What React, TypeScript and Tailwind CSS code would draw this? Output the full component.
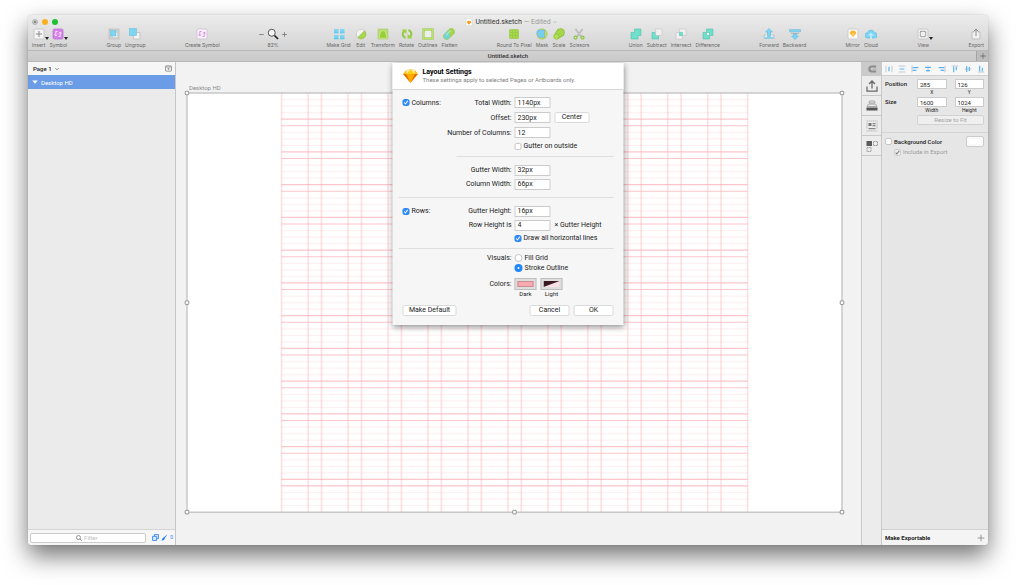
import type { ReactNode } from "react";

const GREEN = "#a5d64c";
const TEAL = "#6fe0cc";
const BLUE = "#7fd4f2";

function Icon({ children, className = "size-3" }: { children: ReactNode; className?: string }) {
  return (
    <svg viewBox="0 0 24 24" fill="none" className={`${className} shrink-0`} aria-hidden="true">
      {children}
    </svg>
  );
}

/** Sketch diamond */
function Gem() {
  return (
    <>
      <path d="M5.5 3 12 2l6.5 1L23 9 12 22 1 9z" fill="#fdad00" />
      <path d="M12 2 6 9h12z" fill="#fed305" />
      <path d="M1 9h5l6 13zM23 9h-5l-6 13z" fill="#ea6c00" />
      <path d="M6 9h12l-6 13z" fill="#fdad00" />
      <path d="M5.5 3 1 9h5zM18.5 3 23 9h-5z" fill="#fdc231" />
      <path d="M5.5 3 12 2 6 9zM18.5 3 12 2l6 7z" fill="#feeeb7" />
    </>
  );
}

function SyncArrows({ color }: { color: string }) {
  return (
    <g stroke={color} strokeWidth="1.8">
      <path d="M11 7H7.5v8M13 17h3.5V9" />
      <path d="m5 13 2.5 3 2.5-3M14 11l2.5-3 2.5 3" />
    </g>
  );
}

const ICONS: Record<string, ReactNode> = {
  Insert: (
    <>
      <rect x="2" y="2" width="20" height="20" rx="3" fill="#f4f4f4" stroke="#bdbdbd" strokeWidth="1.5" />
      <path d="M12 6v12M6 12h12" stroke="#8a8a8a" strokeWidth="2" />
    </>
  ),
  Symbol: (
    <>
      <rect x="2" y="2" width="20" height="20" rx="3" fill="#d583ea" stroke="#b86bd0" strokeWidth="1.5" />
      <SyncArrows color="#fbe9ff" />
    </>
  ),
  Group: (
    <>
      <rect x="2" y="2" width="20" height="20" fill="#d2d2d2" stroke="#bcbcbc" strokeWidth="1.5" />
      <rect x="9" y="9" width="10" height="10" fill="#f6f6f6" stroke="#c4c4c4" />
      <rect x="5" y="5" width="11" height="11" fill={BLUE} stroke="#62bfe0" />
    </>
  ),
  Ungroup: (
    <>
      <rect x="9" y="9" width="13" height="13" fill="#f1f1f1" stroke="#bdbdbd" strokeWidth="1.5" />
      <rect x="1" y="1" width="14" height="14" fill={BLUE} stroke="#62bfe0" />
    </>
  ),
  "Create Symbol": (
    <>
      <rect x="2" y="2" width="20" height="20" rx="3" fill="#f6f0f7" stroke="#c9bfcb" strokeWidth="1.5" />
      <SyncArrows color="#dd83e8" />
    </>
  ),
  "Make Grid": (
    <>
      {[2, 14].map((x) =>
        [2, 14].map((y) => (
          <g key={`${x}-${y}`}>
            <rect x={x} y={y} width="9" height="9" fill={BLUE} />
            <path d={`M${x} ${y + 6.5}h9`} stroke="#4fb3dc" />
          </g>
        ))
      )}
    </>
  ),
  Edit: (
    <>
      <circle cx="12" cy="12" r="9.5" fill="#f3f3f3" stroke="#b5b5b5" />
      <path d="M19 5.5A9.500 9.500 0 1 1 5.500 19z" fill={GREEN} stroke="#8abb35" />
    </>
  ),
  Transform: (
    <>
      <rect x="2" y="2" width="20" height="20" fill="#b9dd75" stroke="#a4c862" />
      <path d="M8 6h8l4 14H4z" fill="#97cf35" stroke="#d6efa5" />
    </>
  ),
  Rotate: (
    <>
      <path d="M9 20C2 17 2 10 6 6M15 4c7 3 7 10 3 14" stroke="#93c93b" strokeWidth="4" />
      <path d="M1 3h10v9zM23 21H13v-9z" fill="#9fd243" />
    </>
  ),
  Outlines: (
    <>
      <rect x="3" y="3" width="18" height="18" fill="#ededed" stroke="#8fc43a" strokeWidth="4" />
      <rect x="3" y="3" width="18" height="18" stroke="#b7e563" strokeWidth="2" />
    </>
  ),
  Flatten: (
    <g transform="rotate(-45 12 12)">
      <rect x="-1" y="5.5" width="26" height="13" rx="6.500" fill={GREEN} stroke="#8cc04c" />
      <path d="M6 6h11L9 18H6A6 6 0 0 1 6 6z" fill="#6fd6d1" />
      <path d="M6 9.500h13" stroke="#fff" strokeOpacity=".5" strokeWidth="2" />
    </g>
  ),
  "Round To Pixel": (
    <>
      <rect x="3" y="3" width="18" height="18" rx="1" fill={GREEN} stroke="#90bf3a" />
      <path d="M3 9h18M3 15h18M9 3v18M15 3v18" stroke="#8fc93a" />
    </>
  ),
  Mask: (
    <>
      <circle cx="12" cy="12" r="10.5" fill="#c2dc62" stroke="#a3bd53" />
      <path d="M4 4h13v15H7A10 10 0 0 1 4 4z" fill="#79cdf0" stroke="#60afd6" />
    </>
  ),
  Scale: (
    <>
      <circle cx="15" cy="9" r="8" fill={GREEN} stroke="#7eac2b" />
      <path d="m2 15 6-10 11 12-10 5z" fill={GREEN} />
      <path d="m2 15 6-10M9 22l10-6" stroke="#7eac2b" />
      <circle cx="7" cy="17" r="5.500" fill="#afe04f" stroke="#7eac2b" />
    </>
  ),
  Scissors: (
    <>
      <path d="M5 2 16 17M19 2 8 17" stroke="#a9a9a9" strokeWidth="3" />
      <path d="M5 2 16 17M19 2 8 17" stroke="#e2e2e2" />
      <circle cx="5" cy="19" r="3" stroke="#8cc63e" strokeWidth="2.5" />
      <circle cx="19" cy="19" r="3" stroke="#8cc63e" strokeWidth="2.5" />
    </>
  ),
  Union: <path d="M9 2h13v13h-6v7H2V9h7z" fill={TEAL} stroke="#43bda6" />,
  Subtract: (
    <>
      <path d="M2 9h7v6h6v7H2z" fill={TEAL} stroke="#43bda6" />
      <path d="M9 2h13v13H9z" fill="#efefef" stroke="#bdbdbd" />
    </>
  ),
  Intersect: (
    <>
      <path d="M9 2h13v13h-7v7H2V9h7z" fill="#efefef" stroke="#bdbdbd" />
      <path d="M9 9h6v6H9z" fill={TEAL} stroke="#43bda6" />
    </>
  ),
  Difference: (
    <>
      <path d="M9 2h13v13h-7v7H2V9h7z" fill={TEAL} stroke="#43bda6" />
      <path d="M9 9h6v6H9z" fill="#f3f3f3" stroke="#43bda6" />
    </>
  ),
  Forward: (
    <>
      <path d="M6 14H2v7h20v-7h-4" fill="#ececec" stroke="#a9bcc4" strokeWidth="1.5" />
      <path d="m12 1 7 7h-4v9H9V8H5z" fill={BLUE} stroke="#54b4d9" />
      <path d="M3 18h18v3H3z" fill={BLUE} />
    </>
  ),
  Backward: (
    <>
      <path d="M1 3h22v5H1z" fill={BLUE} stroke="#7fb6ca" />
      <path d="M4 11h16" stroke="#b6b6b6" strokeWidth="2" />
      <path d="M9 12h6v4h4l-7 7-7-7h4z" fill={BLUE} stroke="#54b4d9" />
    </>
  ),
  Mirror: (
    <>
      <rect x="2" y="2" width="20" height="20" rx="3" fill="#f8f8f8" stroke="#c4c4c4" strokeWidth="1.5" />
      <path d="m8 6 4-1 4 1 3 4-7 8-7-8z" fill="#f8b52c" />
      <path d="M9 10h6l-3 8z" fill="#ffd35c" />
    </>
  ),
  Cloud: (
    <>
      <path d="M6 20a5.500 5.500 0 0 1-1-11 7.500 7.500 0 0 1 14 0 5.500 5.500 0 0 1 0 11z" fill={BLUE} stroke="#4fb7df" />
      <path d="M12 22v-9M8 15l4-4 4 4" stroke="#efffff" strokeWidth="2" />
    </>
  ),
  View: (
    <>
      <rect x="2" y="2" width="20" height="20" rx="3" fill="#f1f1f1" stroke="#bdbdbd" strokeWidth="1.5" />
      <rect x="7" y="7" width="10" height="10" stroke="#999" strokeWidth="1.5" />
      <path d="M9.500 4v3M14.500 4v3M9.500 17v3M14.500 17v3M4 9.500h3M4 14.500h3M17 9.500h3M17 14.500h3" stroke="#b5b5b5" />
    </>
  ),
  Export: (
    <>
      <path d="M8 8H4v14h16V8h-4" fill="#f1f1f1" stroke="#b2b2b2" strokeWidth="1.5" />
      <path d="M12 16V2M7 7l5-5 5 5" stroke="#8a8a8a" strokeWidth="2" />
    </>
  ),
};

const MENU_ITEMS = ["Insert", "Symbol", "View"];

const TOOLBAR: string[][] = [
  ["Insert", "Symbol"],
  ["Group", "Ungroup"],
  ["Create Symbol"],
  ["82%"],
  ["Make Grid", "Edit", "Transform", "Rotate", "Outlines", "Flatten"],
  ["Round To Pixel", "Mask", "Scale", "Scissors"],
  ["Union", "Subtract", "Intersect", "Difference"],
  ["Forward", "Backward"],
  ["Mirror", "Cloud"],
  ["View"],
  ["Export"],
];

function ToolButton({ name }: { name: string }) {
  return (
    <button className="flex flex-col items-center gap-px">
      <span className="relative flex h-3 items-center">
        <Icon>{ICONS[name]}</Icon>
        {MENU_ITEMS.includes(name) && (
          <svg viewBox="0 0 4 3" className="absolute -right-1 bottom-0 h-[3px] w-1" aria-hidden="true">
            <path d="M0 0h4L2 3z" fill="#222" />
          </svg>
        )}
      </span>
      <span>{name}</span>
    </button>
  );
}

function ZoomControl() {
  return (
    <div className="flex flex-col items-center gap-px">
      <div className="flex h-3 items-center gap-[3px]">
        <button aria-label="Zoom out">
          <Icon className="size-[5px]"><path d="M1 12h22" stroke="#777" strokeWidth="4" /></Icon>
        </button>
        <Icon>
          <circle cx="9.5" cy="9.5" r="7" fill="#f1f7fa" stroke="#555" strokeWidth="2" />
          <path d="m15 15 7 7" stroke="#222" strokeWidth="3.5" />
        </Icon>
        <button aria-label="Zoom in">
          <Icon className="size-[5px]"><path d="M1 12h22M12 1v22" stroke="#777" strokeWidth="4" /></Icon>
        </button>
      </div>
      <span>82%</span>
    </div>
  );
}

function TitleBar() {
  return (
    <header className="rounded-t bg-gradient-to-b from-[#ececec] to-[#d3d3d3]">
      <div className="relative flex h-[13px] items-center px-1">
        <div className="flex gap-1">
          <button aria-label="Close" className="flex size-1.5 items-center justify-center rounded-full border border-[#b4b4b4] bg-[#c4c4c4]">
            <span className="size-0.5 rounded-full bg-[#777]" />
          </button>
          <button aria-label="Minimize" className="size-1.5 rounded-full bg-[#fdb021]" />
          <button aria-label="Zoom window" className="size-1.5 rounded-full bg-[#1fc036]" />
        </div>
        <div className="absolute inset-x-0 flex items-center justify-center gap-0.5 pl-1.5 text-[7px] leading-[8px] text-[#333]">
          <Icon className="size-2">
            <path d="M3 1h13l5 5v17H3z" fill="#fff" stroke="#bbb" />
            <path d="m8 9 4-1 4 1 3 4-7 7-7-7z" fill="#f79d1c" />
          </Icon>
          <span>Untitled.sketch</span>
          <span className="text-[#999]">— Edited</span>
          <Icon className="size-1"><path d="m3 7 9 9 9-9" stroke="#999" strokeWidth="3" /></Icon>
        </div>
      </div>
      <div className="flex justify-between px-1 pb-px font-[Inter,sans-serif] text-[5px] leading-[8px] whitespace-nowrap text-[#666]">
        {TOOLBAR.map((group) => (
          <div key={group[0]} className="flex gap-1">
            {group.map((name) => (name === "82%" ? <ZoomControl key={name} /> : <ToolButton key={name} name={name} />))}
          </div>
        ))}
      </div>
    </header>
  );
}

function TabBar() {
  return (
    <div className="flex h-3 items-stretch border-y border-[#b8b8b8] bg-gradient-to-b from-[#d2d2d2] to-[#c9c9c9]">
      <span className="flex-1 pl-3 text-center text-[6px] leading-[10px] font-medium text-[#333]">Untitled.sketch</span>
      <button aria-label="New tab" className="flex w-3 items-center justify-center border-l border-[#a5a5a5] bg-[#bdbdbd]">
        <Icon className="size-1.5"><path d="M12 1v22M1 12h22" stroke="#666" strokeWidth="3" /></Icon>
      </button>
    </div>
  );
}

function Sidebar() {
  return (
    <aside className="flex w-[148px] shrink-0 flex-col border-r border-[#c6c6c6] bg-[#ebebeb]">
      <div className="flex h-[13px] items-center bg-[#f6f6f6] px-[5px]">
        <button className="flex items-center gap-[3px] text-[6px] font-medium text-[#222]">
          Page 1
          <Icon className="size-1"><path d="m2 7 10 10L22 7" stroke="#555" strokeWidth="4" /></Icon>
        </button>
        <button aria-label="Toggle page list" className="-mr-0.5 ml-auto">
          <Icon className="size-[7px]">
            <rect x="2" y="3" width="20" height="18" rx="2" stroke="#777" strokeWidth="2.5" />
            <path d="M2 7h20" stroke="#777" strokeWidth="2" />
            <path d="M8 11h8l-4 6z" fill="#777" />
          </Icon>
        </button>
      </div>
      <button className="flex h-[14px] items-center gap-[3px] bg-[#6b9ce6] px-1 text-[6px] text-white">
        <Icon className="size-1.5"><path d="M1 6h22L12 19z" fill="#fff" /></Icon>
        Desktop HD
      </button>
      <div className="mt-auto flex h-4 items-center gap-1.5 border-t border-[#d4d4d4] bg-[#f6f6f6] px-0.5">
        <label className="flex h-2.5 flex-1 items-center justify-center gap-0.5 rounded-xs border border-[#cbcbcb] bg-white">
          <Icon className="size-1.5">
            <circle cx="10" cy="10" r="8" stroke="#777" strokeWidth="3" />
            <path d="m16 16 7 7" stroke="#777" strokeWidth="3" />
          </Icon>
          <input aria-label="Filter" placeholder="Filter" className="w-4 text-[6px] leading-[8px] outline-none placeholder:text-[#c0c0c0]" />
        </label>
        <div className="flex items-center gap-0.5 text-[5px] text-[#2c83f6]">
          <button aria-label="Filter slices">
            <Icon className="size-[7px]">
              <path d="M8 2h14v14H8z" stroke="#2c83f6" strokeWidth="3" />
              <path d="M2 8h14v14H2z" fill="#dcebff" stroke="#2c83f6" strokeWidth="3" />
            </Icon>
          </button>
          <button aria-label="Filter shapes">
            <Icon className="size-[7px]"><path d="M23 1 10 11c-5 1-4 7-9 11 7 1 12-2 12-8z" fill="#1a78f4" /></Icon>
          </button>
          <span>0</span>
        </div>
      </div>
    </aside>
  );
}

const COLUMNS = 12;
const COLUMN_STEP = 97.6;
const COLUMN_WIDTH = 66;
const ROW_UNIT = 16;

const GRID_LEFT = 230;
const GRID_RIGHT = GRID_LEFT + COLUMN_STEP * (COLUMNS - 1) + COLUMN_WIDTH;

const HANDLES = [[0, 0], [1600, 0], [0, 512], [1600, 512], [0, 1024], [800, 1024], [1600, 1024]];

function Artboard() {
  const lines = Array.from({ length: 63 }, (_, i) => i + 1);
  return (
    <svg viewBox="0 0 1600 1024" className="block w-full overflow-visible" role="img" aria-label="Artboard with layout grid">
      <rect width="1600" height="1024" fill="#fff" />
      {/* every fifth unit is a gutter, so two strong lines close each row */}
      {lines.map((n) => {
        const strong = n % 5 === 4 || n % 5 === 0;
        return (
          <path
            key={n}
            d={`M${GRID_LEFT} ${n * ROW_UNIT}H${GRID_RIGHT}`}
            stroke={strong ? "#fcc6cb" : "#fef1f3"}
            strokeWidth="3"
          />
        );
      })}
      {Array.from({ length: COLUMNS }, (_, i) => {
        const x = GRID_LEFT + i * COLUMN_STEP;
        return <path key={i} d={`M${x + 1} 0V1024M${x + COLUMN_WIDTH} 0V1024`} stroke="#fab4bb" strokeOpacity=".42" strokeWidth="4" />;
      })}
      <rect width="1600" height="1024" stroke="#bdbdbd" strokeWidth="3" fill="none" />
      {HANDLES.map(([x, y]) => (
        <rect key={`${x}-${y}`} x={x - 4.5} y={y - 4.5} width="9" height="9" rx="3" fill="#fff" stroke="#979797" strokeWidth="2.5" />
      ))}
    </svg>
  );
}

function Canvas() {
  return (
    <main className="min-w-0 flex-1 bg-[#f2f2f2] pt-[21px] pr-[19px] pb-8 pl-[11px]">
      <div className="h-2.5 pl-0.5 text-[6px] leading-[9px] text-[#8b8b8b]">Desktop HD</div>
      <Artboard />
    </main>
  );
}

function ToolStrip() {
  return (
    <nav className="flex w-[21px] shrink-0 flex-col border-x border-[#c9c9c9] bg-[#ececec] *:flex *:items-center *:justify-center *:border-b *:border-[#c9c9c9]">
      <button aria-label="Snap" className="h-3.5 bg-[#cacaca]">
        <Icon className="size-2.5">
          <path d="M22 6H12a6 6 0 0 0 0 12h10" stroke="#8c8c8c" strokeWidth="5" />
          <path d="M14 12h8M3 7v10" stroke="#a6a6a6" strokeWidth="2" />
        </Icon>
      </button>
      <button aria-label="Export preview" className="h-5">
        <Icon>
          <path d="M2 13v9h20v-9M12 17V3M6 8l6-6 6 6" stroke="#666" strokeWidth="2.5" />
        </Icon>
      </button>
      <button aria-label="Artboard stack" className="h-5">
        <Icon>
          <path d="M7 2h10l1 4H6zM5 8h14l3 5H2z" fill="#e6e6e6" stroke="#999" strokeWidth="1.5" />
          <path d="M1 15h22v6H1z" fill="#555" />
        </Icon>
      </button>
      <button aria-label="Text styles" className="h-5">
        <Icon>
          <path d="M1 2h22M1 22h22M2 5v13M22 5v13" stroke="#aaa" strokeWidth="1.5" strokeDasharray="3 1" />
          <path d="M5 6h6v6H5z" fill="#777" />
          <path d="M13 7h6M13 11h6M5 17h14" stroke="#888" strokeWidth="2.5" />
        </Icon>
      </button>
      <button aria-label="Symbols" className="h-5">
        <Icon>
          <path d="M1 2h11v10H1z" fill="#5a5a5a" />
          <path d="M15 3h8v8h-8zM2 15h8v8H2z" stroke="#888" strokeWidth="1.5" strokeDasharray="3 1" />
        </Icon>
      </button>
    </nav>
  );
}

const ALIGN: { name: string; bar: string; guide: string }[] = [
  { name: "Distribute horizontally", bar: "M12 5v14", guide: "M3 2v20M21 2v20" },
  { name: "Distribute vertically", bar: "M5 12h14", guide: "M2 3h20M2 21h20" },
  { name: "Align left", bar: "M5 8h17M5 16h11", guide: "M3 2v20" },
  { name: "Align center", bar: "M3 7h18M6 17h12", guide: "M12 2v20" },
  { name: "Align right", bar: "M2 8h17M8 16h11", guide: "M21 2v20" },
  { name: "Align top", bar: "M8 5v17M16 5v11", guide: "M2 3h20" },
  { name: "Align middle", bar: "M8 3v18M16 6v12", guide: "M2 12h20" },
  { name: "Align bottom", bar: "M8 2v17M16 8v11", guide: "M2 21h20" },
];

function NumberField({ label, value }: { label: string; value: string }) {
  return (
    <label className="flex flex-1 flex-col items-center text-[5px] leading-[7px] text-[#222]">
      <input defaultValue={value} className="h-2.5 w-full border border-[#cbcbcb] bg-white px-[2px] text-[6px] outline-none" />
      {label}
    </label>
  );
}

function Inspector() {
  return (
    <aside className="flex w-[106px] shrink-0 flex-col bg-[#e6e6e6] text-[6px] leading-[10px] text-[#222]">
      <div className="flex h-3.5 items-center justify-between border-b border-[#d0d0d0] bg-[#f7f7f7] px-[3px]">
        {ALIGN.map((item) => (
          <button key={item.name} aria-label={item.name}>
            <Icon className="size-2">
              <path d={item.guide} stroke="#aab6c0" strokeWidth="2" />
              <path d={item.bar} stroke="#57b2f5" strokeWidth="3.5" />
            </Icon>
          </button>
        ))}
      </div>
      <div className="flex flex-col gap-px py-[3px] pr-1 pl-[3px]">
        <div className="flex gap-2">
          <span className="w-6 font-medium">Position</span>
          <NumberField label="X" value="285" />
          <NumberField label="Y" value="126" />
        </div>
        <div className="flex gap-2">
          <span className="w-6 font-medium">Size</span>
          <NumberField label="Width" value="1600" />
          <NumberField label="Height" value="1024" />
        </div>
        <button className="ml-8 h-2.5 rounded-xs border border-[#d2d2d2] bg-[#efefef] leading-[8px] text-[#a3a3a3]">
          Resize to Fit
        </button>
      </div>
      <div className="mt-1 flex items-center justify-between border-t border-[#d4d4d4] pt-[3px] pr-1 pl-[3px] font-medium">
        <Check label="Background Color" />
        <button aria-label="Background color" className="h-[11px] w-[18px] rounded-xs border border-[#cbcbcb] bg-[#f9f9f9] p-0.5">
          <span className="block h-full bg-white" />
        </button>
      </div>
      <div className="pl-3">
        <Check label="Include in Export" checked muted />
      </div>
      <div className="mt-auto flex h-4 items-center justify-between border-t border-[#d0d0d0] bg-[#f4f4f4] px-[3px] font-bold">
        Make Exportable
        <button aria-label="Add export size">
          <Icon className="size-2"><path d="M12 2v20M2 12h20" stroke="#888" strokeWidth="2.5" /></Icon>
        </button>
      </div>
    </aside>
  );
}

function Check({ label, checked = false, muted = false }: { label: string; checked?: boolean; muted?: boolean }) {
  return (
    <label className={`flex items-center gap-0.5 whitespace-nowrap ${muted ? "text-[#9c9c9c]" : ""}`}>
      <span className="grid">
        <input
          type="checkbox"
          defaultChecked={checked}
          disabled={muted}
          className="peer col-start-1 row-start-1 size-[7px] appearance-none rounded-[2px] border border-[#c6c6c6] bg-white checked:border-[#2784f5] checked:bg-[#2f8cfb] disabled:border-[#cecece] disabled:bg-[#ededed]"
        />
        <svg
          viewBox="0 0 24 24"
          fill="none"
          className="pointer-events-none invisible col-start-1 row-start-1 size-[7px] peer-checked:visible"
          aria-hidden="true"
        >
          <path d="m6 12 4 5 8-11" stroke={muted ? "#777" : "#fff"} strokeWidth="3.5" />
        </svg>
      </span>
      {label}
    </label>
  );
}

function Radio({ label, checked = false }: { label: string; checked?: boolean }) {
  return (
    <label className="flex items-center gap-0.5">
      <input
        type="radio"
        name="visuals"
        defaultChecked={checked}
        className="size-2 appearance-none rounded-full border border-[#c6c6c6] bg-white checked:border-[3px] checked:border-[#2188fb]"
      />
      {label}
    </label>
  );
}

/** Two-column form row: right-aligned label, then the control */
function Row({ label, lead, htmlFor, className, children }: {
  label?: string;
  lead?: ReactNode;
  htmlFor?: string;
  className: string;
  children: ReactNode;
}) {
  return (
    <div className={`grid grid-cols-[109px_1fr] items-center gap-x-[3px] ${className}`}>
      <div className="flex items-center">
        {lead}
        <label htmlFor={htmlFor} className="ml-auto">{label}</label>
      </div>
      <div className="flex items-center gap-1">{children}</div>
    </div>
  );
}

function Field({ id, value }: { id: string; value: string }) {
  return <input id={id} defaultValue={value} className="h-[11px] w-9 border border-[#cbcbcb] bg-white px-[2px] outline-none" />;
}

function PushButton({ children, className }: { children: ReactNode; className: string }) {
  return (
    <button className={`h-[11px] rounded-xs border border-[#dadada] bg-white leading-[9px] ${className}`}>
      {children}
    </button>
  );
}

function LayoutDialog() {
  return (
    <section
      role="dialog"
      aria-label="Layout Settings"
      className="absolute top-px left-1/2 w-[231px] -translate-x-1/2 bg-[#f6f6f6] text-[7px] leading-[8px] text-[#222] shadow-[0_2px_6px_rgba(0,0,0,0.45)]"
    >
      <div className="flex h-[27px] items-center gap-1 border-b border-[#d6d6d6] bg-white px-2.5">
        <Icon className="size-4"><Gem /></Icon>
        <div className="leading-[7px]">
          <h1 className="font-bold text-black">Layout Settings</h1>
          <p className="text-[6px] whitespace-nowrap text-[#808080]">These settings apply to selected Pages or Artboards only.</p>
        </div>
      </div>

      <div className="px-2.5 pt-[5px] pb-[9px]">
        <Row className="h-[15px]" lead={<Check label="Columns:" checked />} label="Total Width:" htmlFor="total">
          <Field id="total" value="1140px" />
        </Row>
        <Row className="h-[15px]" label="Offset:" htmlFor="offset">
          <Field id="offset" value="230px" />
          <PushButton className="w-[35px]">Center</PushButton>
        </Row>
        <Row className="h-[15px]" label="Number of Columns:" htmlFor="count">
          <Field id="count" value="12" />
        </Row>
        <Row className="h-3">
          <Check label="Gutter on outside" />
        </Row>
        <hr className="mt-1 mb-1.5 ml-[54px] border-[#dedede]" />
        <Row className="h-[14px]" label="Gutter Width:" htmlFor="gutter-width">
          <Field id="gutter-width" value="32px" />
        </Row>
        <Row className="h-[14px]" label="Column Width:" htmlFor="column-width">
          <Field id="column-width" value="66px" />
        </Row>
        <hr className="my-1.5 -ml-1 border-[#dedede]" />
        <Row className="h-[14px]" lead={<Check label="Rows:" checked />} label="Gutter Height:" htmlFor="gutter-height">
          <Field id="gutter-height" value="16px" />
        </Row>
        <Row className="h-[14px]" label="Row Height is" htmlFor="row-height">
          <Field id="row-height" value="4" />
          <span>× Gutter Height</span>
        </Row>
        <Row className="h-3">
          <Check label="Draw all horizontal lines" checked />
        </Row>
        <hr className="my-1 -ml-1 border-[#dedede]" />
        <Row className="h-2.5" label="Visuals:">
          <Radio label="Fill Grid" />
        </Row>
        <Row className="h-2.5">
          <Radio label="Stroke Outline" checked />
        </Row>
        <Row className="mt-[5px] h-3" label="Colors:">
          <button aria-label="Dark color" className="h-3 w-[22px] border border-[#bfbfbf] bg-[#dedede] p-0.5">
            <span className="block h-full border border-[#c98d92] bg-[#fba9b0]" />
          </button>
          <button aria-label="Light color" className="h-3 w-[22px] border border-[#bfbfbf] bg-[#dedede] p-0.5">
            <svg viewBox="0 0 16 6" preserveAspectRatio="none" className="block h-full w-full" aria-hidden="true">
              <path d="M0 0h16v6H0z" fill="#fbdfe6" />
              <path d="M0 0h16L0 6z" fill="#3b1a26" />
            </svg>
          </button>
        </Row>
        <div className="ml-28 flex gap-1 text-center text-[6px] leading-[8px]">
          <span className="w-[22px]">Dark</span>
          <span className="w-[22px]">Light</span>
        </div>
        <div className="mt-[7px] flex gap-1">
          <PushButton className="mr-auto w-[54px]">Make Default</PushButton>
          <PushButton className="w-10">Cancel</PushButton>
          <PushButton className="w-10">OK</PushButton>
        </div>
      </div>
    </section>
  );
}

export default function App() {
  return (
    <div className="flex min-h-screen flex-col bg-white px-7 pt-[15px] pb-10 font-[Roboto,sans-serif]">
      <div className="flex flex-1 flex-col rounded shadow-[0_11px_24px_rgba(0,0,0,0.55),0_0_1px_rgba(0,0,0,0.4)]">
        <TitleBar />
        <TabBar />
        <div className="relative flex flex-1 overflow-hidden rounded-b">
          <Sidebar />
          <Canvas />
          <ToolStrip />
          <Inspector />
          <LayoutDialog />
        </div>
      </div>
    </div>
  );
}
